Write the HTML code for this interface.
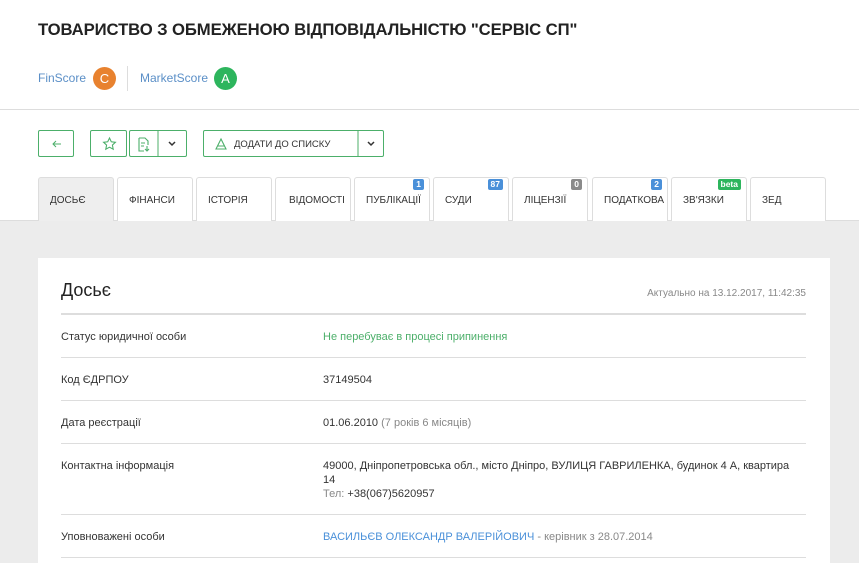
<!DOCTYPE html>
<html><head><meta charset="utf-8"><style>
*{box-sizing:border-box;margin:0;padding:0}
body{width:859px;height:563px;overflow:hidden;background:#fff;font-family:"Liberation Sans",Arial,sans-serif;color:#333;position:relative}
.abs{position:absolute}
h1{position:absolute;left:38px;top:20px;font-size:16.7px;font-weight:bold;color:#222;letter-spacing:-0.1px}
.score{font-size:12px;color:#5b8fc7}
.circ{position:absolute;width:23px;height:23px;border-radius:50%;color:#fff;font-size:13px;text-align:center;line-height:23px}
.btn{position:absolute;top:130px;height:27px;border:1px solid #4caf6a;border-radius:2px;background:#fff}
.tab{position:absolute;top:177px;height:44px;width:76px;border:1px solid #ddd;border-bottom:none;border-radius:3px 3px 0 0;background:#fff;font-size:10px;color:#333;padding:17px 0 0 11px}
.tab.act{background:#eeeeee}
.badge{position:absolute;top:1px;right:5px;font-size:8.5px;color:#fff;border-radius:2px;padding:0 3px;line-height:11px;font-weight:bold}
.gray{position:absolute;left:0;top:220px;width:859px;height:343px;background:#ececec;border-top:1px solid #ddd}
.card{position:absolute;left:38px;top:258px;width:792px;height:320px;background:#fff}
.row{position:absolute;left:23px;width:745px;border-top:1px solid #ddd;font-size:11px}
.lab{position:absolute;left:0}
.val{position:absolute;left:262px;line-height:14px}
</style></head><body>
<h1>ТОВАРИСТВО З ОБМЕЖЕНОЮ ВІДПОВІДАЛЬНІСТЮ "СЕРВІС СП"</h1>
<div class="abs score" style="left:38px;top:71px">FinScore</div>
<div class="circ" style="left:93px;top:67px;background:#e8822f">C</div>
<div class="abs" style="left:127px;top:66px;width:1px;height:25px;background:#ddd"></div>
<div class="abs score" style="left:140px;top:71px">MarketScore</div>
<div class="circ" style="left:214px;top:67px;background:#2db55d">A</div>
<div class="abs" style="left:0;top:109px;width:859px;height:1px;background:#ddd"></div>

<div class="btn" style="left:38px;width:36px"><svg width="36" height="26" class="abs" style="left:0;top:0"><path d="M22 13H14M17 10L14 13L17 16" stroke="#4caf6a" fill="none" stroke-width="1"/></svg></div>
<div class="btn" style="left:90px;width:37px"><svg width="37" height="26" class="abs" style="left:0;top:0"><path d="M18.5 7l1.8 3.8 4.1.5-3 2.8.8 4.1-3.7-2-3.7 2 .8-4.1-3-2.8 4.1-.5z" stroke="#4caf6a" fill="none" stroke-width="1.1"/></svg></div>
<div class="btn" style="left:129px;width:58px"><svg width="58" height="26" class="abs" style="left:0;top:0"><path d="M9 7h6l3 3v4M9 7v13h5M11 12h4M11 15h3" stroke="#4caf6a" fill="none" stroke-width="1.1"/><path d="M17 15v5M15 18l2 2 2-2" stroke="#4caf6a" fill="none" stroke-width="1.1"/><line x1="28" y1="0" x2="28" y2="26" stroke="#4caf6a"/><path d="M39 11l3 3 3-3" stroke="#333" fill="none" stroke-width="1.5"/></svg></div>
<div class="btn" style="left:203px;width:181px"><svg width="181" height="26" class="abs" style="left:0;top:0"><path d="M12 18L17 8L22 18Z M14 15h6" stroke="#4caf6a" fill="none" stroke-width="1.1"/><line x1="154" y1="0" x2="154" y2="26" stroke="#4caf6a"/><path d="M164 11l3 3 3-3" stroke="#333" fill="none" stroke-width="1.5"/></svg><span class="abs" style="left:30px;top:8px;font-size:9.5px;color:#333">ДОДАТИ ДО СПИСКУ</span></div>

<div class="gray"></div>
<div class="tab act" style="left:38px">ДОСЬЄ</div>
<div class="tab" style="left:117px">ФІНАНСИ</div>
<div class="tab" style="left:196px">ІСТОРІЯ</div>
<div class="tab" style="left:275px;padding-left:13px">ВІДОМОСТІ</div>
<div class="tab" style="left:354px">ПУБЛІКАЦІЇ<span class="badge" style="background:#4a90d9">1</span></div>
<div class="tab" style="left:433px">СУДИ<span class="badge" style="background:#4a90d9">87</span></div>
<div class="tab" style="left:512px">ЛІЦЕНЗІЇ<span class="badge" style="background:#8a8a8a">0</span></div>
<div class="tab" style="left:592px">ПОДАТКОВА<span class="badge" style="background:#4a90d9">2</span></div>
<div class="tab" style="left:671px">ЗВ'ЯЗКИ<span class="badge" style="background:#2db55d">beta</span></div>
<div class="tab" style="left:750px">ЗЕД</div>

<div class="card">
<div class="abs" style="left:23px;top:22px;font-size:18px;color:#222">Досьє</div>
<div class="abs" style="right:24px;top:30px;font-size:10px;color:#888">Актуально на 13.12.2017, 11:42:35</div>
<div class="abs" style="left:23px;top:55px;width:745px;height:2px;background:#ddd"></div>
<div class="row" style="top:57px;border-top:none"><span class="lab" style="top:16px">Статус юридичної особи</span><span class="val" style="top:15px;color:#4caf6a">Не перебуває в процесі припинення</span></div>
<div class="row" style="top:99px"><span class="lab" style="top:16px">Код ЄДРПОУ</span><span class="val" style="top:15px">37149504</span></div>
<div class="row" style="top:142px"><span class="lab" style="top:16px">Дата реєстрації</span><span class="val" style="top:15px">01.06.2010 <span style="color:#888">(7 років 6 місяців)</span></span></div>
<div class="row" style="top:185px"><span class="lab" style="top:16px">Контактна інформація</span><span class="val" style="top:15px;width:475px">49000, Дніпропетровська обл., місто Дніпро, ВУЛИЦЯ ГАВРИЛЕНКА, будинок 4 А, квартира 14<br><span style="color:#888">Тел:</span> +38(067)5620957</span></div>
<div class="row" style="top:256px"><span class="lab" style="top:16px">Уповноважені особи</span><span class="val" style="top:15px"><span style="color:#4a90d9">ВАСИЛЬЄВ ОЛЕКСАНДР ВАЛЕРІЙОВИЧ</span> <span style="color:#888">- керівник з 28.07.2014</span></span></div>
<div class="row" style="top:299px"></div>
</div>
</body></html>
